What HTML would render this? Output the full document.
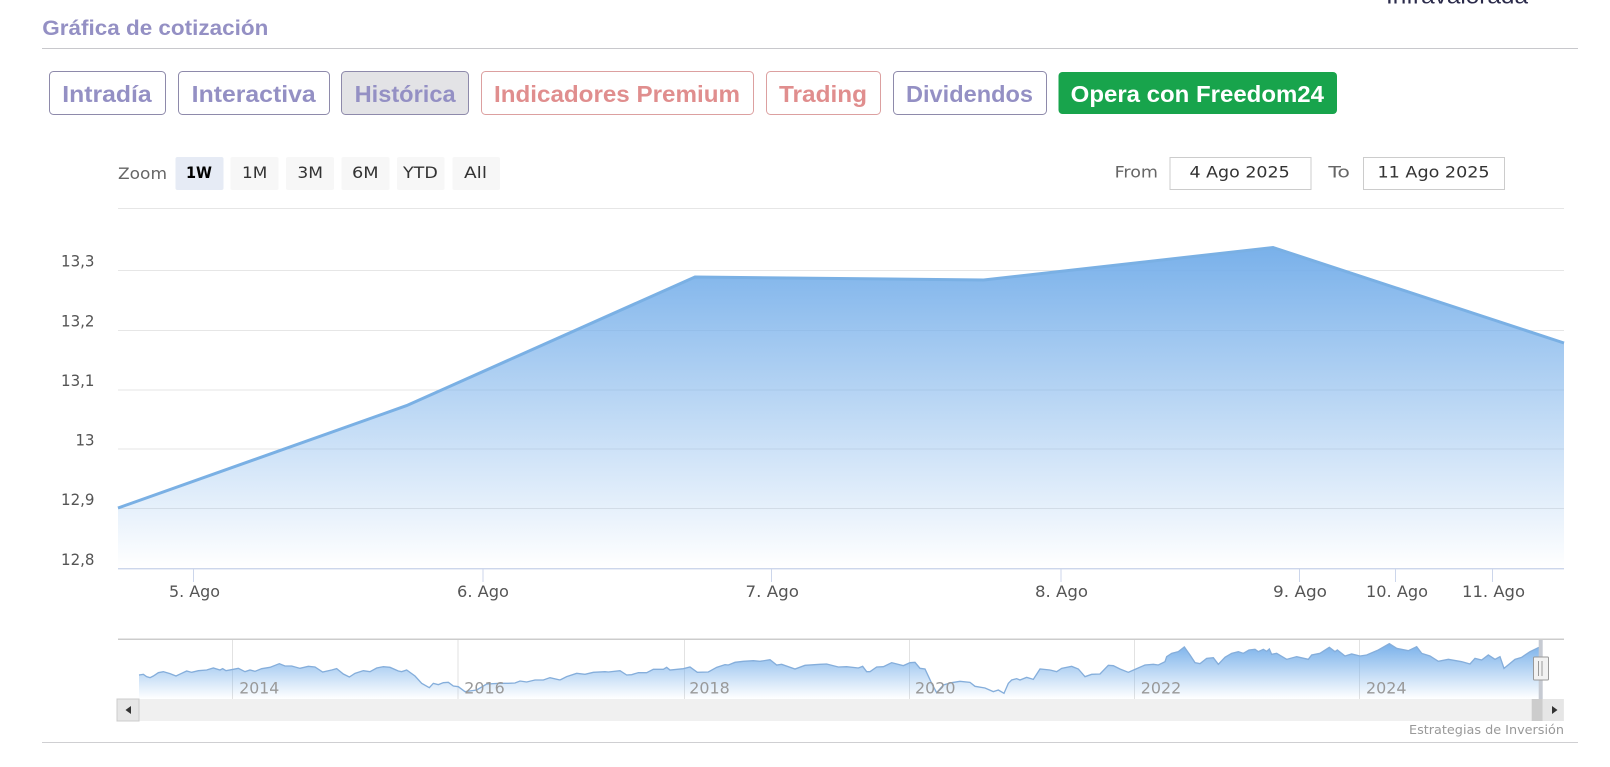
<!DOCTYPE html>
<html lang="es"><head><meta charset="utf-8"><title>Gráfica de cotización</title>
<style>html,body{margin:0;padding:0;background:#fff;width:1610px;height:767px;overflow:hidden}svg{display:block}
.t{font-family:"Liberation Sans",sans-serif;font-weight:bold;font-size:23.5px}
.d{font-family:"DejaVu Sans",sans-serif;font-size:16px;fill:#555}
.n{font-family:"DejaVu Sans",sans-serif;font-size:16px;fill:#999}
.p{fill:#9490c4}.r{fill:#e08e8e}</style></head><body>
<svg width="1610" height="767" viewBox="0 0 1610 767" xmlns="http://www.w3.org/2000/svg">
<defs>
<linearGradient id="m" gradientUnits="userSpaceOnUse" x1="0" y1="245" x2="0" y2="568"><stop offset="0" stop-color="#78b0ea"/><stop offset="1" stop-color="#78b0ea" stop-opacity="0"/></linearGradient>
<linearGradient id="v" gradientUnits="userSpaceOnUse" x1="0" y1="70" x2="0" y2="236"><stop offset="0" stop-color="#78b0ea"/><stop offset="1" stop-color="#78b0ea" stop-opacity="0"/></linearGradient>
</defs>
<rect width="1610" height="767" fill="#fff"/>
<text x="1386" y="3.5" textLength="142" lengthAdjust="spacingAndGlyphs" font-family="Liberation Sans,sans-serif" font-size="22" fill="#2a2a4a">Infravalorada</text>
<text class="t p" x="42.3" y="35" style="font-size:21.5px" textLength="226" lengthAdjust="spacingAndGlyphs">Gráfica de cotización</text>
<rect x="42" y="48" width="1536" height="1" fill="#c8c8cc"/>

<g fill="#fff" stroke="#8e8aab">
<rect x="49.5" y="71.5" width="116" height="43" rx="4"/>
<rect x="178.5" y="71.5" width="151" height="43" rx="4"/>
<rect x="341.5" y="71.5" width="127" height="43" rx="4" fill="#e3e3e6"/>
<rect x="893.5" y="71.5" width="153" height="43" rx="4"/>
</g>
<g fill="#fff" stroke="#dca0a0">
<rect x="481.5" y="71.5" width="272" height="43" rx="4"/>
<rect x="766.5" y="71.5" width="114" height="43" rx="4"/>
</g>
<rect x="1058.5" y="72" width="278.5" height="42" rx="4" fill="#18a44c"/>
<text class="t p" x="62.3" y="102" textLength="89.4" lengthAdjust="spacingAndGlyphs">Intradía</text>
<text class="t p" x="191.7" y="102" textLength="124" lengthAdjust="spacingAndGlyphs">Interactiva</text>
<text class="t p" x="354.6" y="102" textLength="101" lengthAdjust="spacingAndGlyphs">Histórica</text>
<text class="t r" x="494" y="102" textLength="246" lengthAdjust="spacingAndGlyphs">Indicadores Premium</text>
<text class="t r" x="779" y="102" textLength="88" lengthAdjust="spacingAndGlyphs">Trading</text>
<text class="t p" x="906" y="102" textLength="127" lengthAdjust="spacingAndGlyphs">Dividendos</text>
<text class="t" fill="#fff" x="1070.7" y="102" textLength="253.3" lengthAdjust="spacingAndGlyphs">Opera con Freedom24</text>

<text class="d" style="fill:#666" x="118" y="179" textLength="49" lengthAdjust="spacingAndGlyphs">Zoom</text>
<g fill="#f7f7f7">
<rect x="175.5" y="157" width="48" height="33" rx="2" fill="#e6ebf5"/>
<rect x="230.5" y="157" width="48" height="33" rx="2"/>
<rect x="286" y="157" width="48" height="33" rx="2"/>
<rect x="341.5" y="157" width="48" height="33" rx="2"/>
<rect x="397" y="157" width="47.5" height="33" rx="2"/>
<rect x="452.5" y="157" width="47.5" height="33" rx="2"/>
</g>
<text class="d" style="fill:#000;font-weight:bold" x="186" y="178" textLength="26" lengthAdjust="spacingAndGlyphs">1W</text>
<g class="d" style="fill:#333">
<text x="242" y="178" textLength="25.3" lengthAdjust="spacingAndGlyphs">1M</text>
<text x="297.4" y="178" textLength="25.6" lengthAdjust="spacingAndGlyphs">3M</text>
<text x="352" y="178" textLength="26.6" lengthAdjust="spacingAndGlyphs">6M</text>
<text x="403" y="178" textLength="34.8" lengthAdjust="spacingAndGlyphs">YTD</text>
<text x="464" y="178" textLength="23" lengthAdjust="spacingAndGlyphs">All</text>
</g>
<text class="d" style="fill:#666" x="1114.6" y="177.5" textLength="43.4" lengthAdjust="spacingAndGlyphs">From</text>
<text class="d" style="fill:#666" x="1328.4" y="177.5" textLength="21.6" lengthAdjust="spacingAndGlyphs">To</text>
<rect x="1170" y="157.5" width="141" height="32" fill="#fff" stroke="#ccc"/>
<rect x="1363.5" y="157.5" width="141" height="32" fill="#fff" stroke="#ccc"/>
<text class="d" style="fill:#333" x="1189.5" y="177.5" textLength="100.2" lengthAdjust="spacingAndGlyphs">4 Ago 2025</text>
<text class="d" style="fill:#333" x="1377.5" y="177.5" textLength="112.1" lengthAdjust="spacingAndGlyphs">11 Ago 2025</text>

<g fill="#e6e6e6">
<rect x="118" y="208" width="1446" height="1"/><rect x="118" y="270" width="1446" height="1"/><rect x="118" y="330" width="1446" height="1"/><rect x="118" y="389.5" width="1446" height="1"/><rect x="118" y="448.5" width="1446" height="1"/><rect x="118" y="508" width="1446" height="1"/>
</g>
<polygon points="118,508 406.6,405.6 695,277 983.7,280 1273,247.5 1564,343 1564,568 118,568" fill="url(#m)"/>
<polyline points="118,508 406.6,405.6 695,277 983.7,280 1273,247.5 1564,343" fill="none" stroke="#7ab0e4" stroke-width="3"/>
<rect x="118" y="568" width="1446" height="1.4" fill="#ccd6eb"/>
<g fill="#ccd6eb">
<rect x="193" y="568" width="1" height="14"/><rect x="482.5" y="568" width="1" height="14"/><rect x="771" y="568" width="1" height="14"/><rect x="1060.5" y="568" width="1" height="14"/><rect x="1299" y="568" width="1" height="14"/><rect x="1395" y="568" width="1" height="14"/><rect x="1492" y="568" width="1" height="14"/>
</g>
<g class="d" text-anchor="end">
<text x="94.5" y="266.5" textLength="33.5" lengthAdjust="spacingAndGlyphs">13,3</text><text x="94.5" y="326.5" textLength="33.5" lengthAdjust="spacingAndGlyphs">13,2</text><text x="94.5" y="386" textLength="33.5" lengthAdjust="spacingAndGlyphs">13,1</text><text x="94.5" y="445.5" textLength="19" lengthAdjust="spacingAndGlyphs">13</text><text x="94.5" y="505" textLength="33.5" lengthAdjust="spacingAndGlyphs">12,9</text><text x="94.5" y="565" textLength="33.5" lengthAdjust="spacingAndGlyphs">12,8</text>
</g>
<g class="d">
<text x="169" y="597" textLength="51" lengthAdjust="spacingAndGlyphs">5. Ago</text>
<text x="457" y="597" textLength="52" lengthAdjust="spacingAndGlyphs">6. Ago</text>
<text x="745.5" y="597" textLength="53.5" lengthAdjust="spacingAndGlyphs">7. Ago</text>
<text x="1035" y="597" textLength="53" lengthAdjust="spacingAndGlyphs">8. Ago</text>
<text x="1273" y="597" textLength="54" lengthAdjust="spacingAndGlyphs">9. Ago</text>
<text x="1366" y="597" textLength="62" lengthAdjust="spacingAndGlyphs">10. Ago</text>
<text x="1462" y="597" textLength="63" lengthAdjust="spacingAndGlyphs">11. Ago</text>
</g>

<rect x="118" y="638.5" width="1446" height="1.5" fill="#ccc"/>
<g fill="#e2e2e2">
<rect x="232" y="640" width="1" height="59"/><rect x="457.5" y="640" width="1" height="59"/><rect x="684" y="640" width="1" height="59"/><rect x="909" y="640" width="1" height="59"/><rect x="1134" y="640" width="1" height="59"/><rect x="1359" y="640" width="1" height="59"/>
</g>
<g transform="translate(100,620) scale(.33333)">
<polygon fill="url(#v)" points="117,236 117,165 130,163 140,170 150,173 160,168 175,158 190,155 210,161 228,168 245,160 260,153 275,157 295,152 320,150 340,144 360,150 368,146 378,152 400,148 415,145 435,155 450,150 465,154 485,146 510,142 538,131 555,138 575,138 600,145 625,139 645,141 668,156 695,150 710,146 730,162 748,171 765,160 790,152 810,155 830,144 850,140 870,142 895,153 905,155 920,150 945,168 965,190 988,203 1000,190 1015,194 1030,188 1045,187 1060,198 1075,200 1095,215 1130,210 1160,192 1200,190 1225,190 1245,189 1260,183 1280,186 1305,180 1330,180 1350,173 1380,180 1380,236"/>
<polyline fill="none" stroke="#85aedb" stroke-width="4" points="117,165 130,163 140,170 150,173 160,168 175,158 190,155 210,161 228,168 245,160 260,153 275,157 295,152 320,150 340,144 360,150 368,146 378,152 400,148 415,145 435,155 450,150 465,154 485,146 510,142 538,131 555,138 575,138 600,145 625,139 645,141 668,156 695,150 710,146 730,162 748,171 765,160 790,152 810,155 830,144 850,140 870,142 895,153 905,155 920,150 945,168 965,190 988,203 1000,190 1015,194 1030,188 1045,187 1060,198 1075,200 1095,215 1130,210 1160,192 1200,190 1225,190 1245,189 1260,183 1280,186 1305,180 1330,180 1350,173 1380,180"/>
</g>
<g transform="translate(560,620) scale(.33333)">
<polygon fill="url(#v)" points="0,236 0,180 20,170 50,160 75,163 100,157 135,155 145,156 180,152 200,165 215,164 235,158 260,158 280,148 310,148 320,142 330,150 370,146 390,141 412,157 445,156 470,142 495,134 505,135 525,127 550,124 580,122 600,124 630,119 650,135 665,133 705,147 735,136 780,133 800,132 835,141 860,140 895,144 908,139 920,155 930,155 950,141 970,140 995,128 1030,137 1050,128 1065,127 1080,145 1095,147 1115,190 1130,218 1150,195 1175,188 1200,184 1230,187 1245,199 1275,204 1300,215 1315,210 1332,220 1345,190 1355,180 1370,176 1380,180 1400,172 1420,178 1440,147 1470,150 1470,236"/>
<polyline fill="none" stroke="#85aedb" stroke-width="4" points="0,180 20,170 50,160 75,163 100,157 135,155 145,156 180,152 200,165 215,164 235,158 260,158 280,148 310,148 320,142 330,150 370,146 390,141 412,157 445,156 470,142 495,134 505,135 525,127 550,124 580,122 600,124 630,119 650,135 665,133 705,147 735,136 780,133 800,132 835,141 860,140 895,144 908,139 920,155 930,155 950,141 970,140 995,128 1030,137 1050,128 1065,127 1080,145 1095,147 1115,190 1130,218 1150,195 1175,188 1200,184 1230,187 1245,199 1275,204 1300,215 1315,210 1332,220 1345,190 1355,180 1370,176 1380,180 1400,172 1420,178 1440,147 1470,150"/>
</g>
<g transform="translate(1050,620) scale(.33333)">
<polygon fill="url(#v)" points="0,236 0,150 20,155 35,145 65,139 85,147 105,170 125,163 150,162 175,136 190,137 210,147 235,157 255,148 285,135 310,133 325,135 345,125 350,110 365,100 385,95 403,81 420,105 435,128 450,131 470,115 490,113 505,133 525,112 545,100 565,95 580,100 597,90 615,88 625,95 640,88 650,94 658,87 665,103 680,100 710,118 740,110 775,118 785,105 810,100 838,82 855,95 862,90 885,108 905,102 930,108 950,105 985,90 1018,71 1040,85 1075,92 1100,80 1115,100 1140,108 1165,124 1195,118 1235,125 1260,132 1275,115 1295,120 1315,105 1335,118 1350,110 1362,145 1395,118 1415,112 1440,95 1467,82 1467,236"/>
<polyline fill="none" stroke="#85aedb" stroke-width="4" points="0,150 20,155 35,145 65,139 85,147 105,170 125,163 150,162 175,136 190,137 210,147 235,157 255,148 285,135 310,133 325,135 345,125 350,110 365,100 385,95 403,81 420,105 435,128 450,131 470,115 490,113 505,133 525,112 545,100 565,95 580,100 597,90 615,88 625,95 640,88 650,94 658,87 665,103 680,100 710,118 740,110 775,118 785,105 810,100 838,82 855,95 862,90 885,108 905,102 930,108 950,105 985,90 1018,71 1040,85 1075,92 1100,80 1115,100 1140,108 1165,124 1195,118 1235,125 1260,132 1275,115 1295,120 1315,105 1335,118 1350,110 1362,145 1395,118 1415,112 1440,95 1467,82"/>
</g>
<g class="n">
<text x="239.3" y="693.5" textLength="40" lengthAdjust="spacingAndGlyphs">2014</text>
<text x="464.3" y="693.5" textLength="40.5" lengthAdjust="spacingAndGlyphs">2016</text>
<text x="689.3" y="693.5" textLength="40.5" lengthAdjust="spacingAndGlyphs">2018</text>
<text x="915" y="693.5" textLength="40.5" lengthAdjust="spacingAndGlyphs">2020</text>
<text x="1140.7" y="693.5" textLength="40.5" lengthAdjust="spacingAndGlyphs">2022</text>
<text x="1366" y="693.5" textLength="40.5" lengthAdjust="spacingAndGlyphs">2024</text>
</g>

<rect x="117" y="699" width="1447" height="22" fill="#f0f0f0"/>
<rect x="117" y="699" width="22" height="22" fill="#e6e6e6" stroke="#ccc"/>
<polygon points="131,706 131,714 125.5,710" fill="#333"/>
<rect x="1531.7" y="699" width="11" height="22" fill="#ccc"/>
<rect x="1542.7" y="699" width="21" height="22" fill="#e6e6e6"/>
<polygon points="1552,706 1552,714 1557.5,710" fill="#333"/>
<rect x="1538.7" y="640" width="4" height="59" fill="#c6cad2"/>
<rect x="1533.5" y="657" width="15" height="23" rx="1" fill="#f2f2f2" stroke="#999"/>
<rect x="1538" y="661" width="1" height="15" fill="#999"/><rect x="1541.5" y="661" width="1" height="15" fill="#999"/>
<text x="1409" y="734" textLength="155" lengthAdjust="spacingAndGlyphs" font-family="DejaVu Sans,sans-serif" font-size="12.5" fill="#999">Estrategias de Inversión</text>
<rect x="42" y="742" width="1536" height="1" fill="#cfcfd2"/>
</svg>
</body></html>
